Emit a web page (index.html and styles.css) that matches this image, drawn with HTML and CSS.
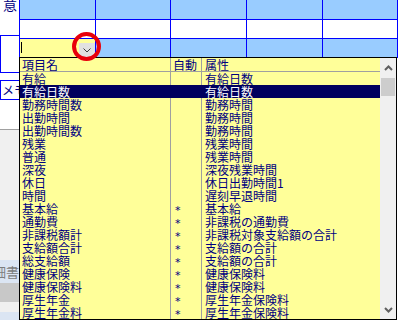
FILE: index.html
```html
<!DOCTYPE html>
<html lang="ja">
<head>
    <meta charset="UTF-8">
    <title>項目選択</title>
    <link rel="stylesheet" href="styles.css">
</head>
<body>
<div class="screen">
    <div class="side">
        <div class="side-head">意</div>
        <div class="side-cell"></div>
        <div class="side-gap"></div>
        <div class="side-box">メモ</div>
        <div class="side-white"></div>
        <div class="side-panel"></div>
        <div class="side-tab">明細書</div>
        <div class="side-bar"></div>
        <div class="side-light"></div>
        <div class="side-foot"></div>
    </div>
    <div class="main">
        <div class="grid">
            <div class="cell blue"></div>
            <div class="cell blue"></div>
            <div class="cell blue"></div>
            <div class="cell blue"></div>
            <div class="cell blue"></div>
            <div class="cell"></div>
            <div class="cell"></div>
            <div class="cell"></div>
            <div class="cell"></div>
            <div class="cell"></div>
            <div class="cell editor">
                <span class="caret"></span>
                <span class="drop-btn">
                    <svg width="8" height="5" viewBox="0 0 8 5"><polyline points="0.5,0.5 4,4 7.5,0.5" fill="none" stroke="#404040" stroke-width="1"/></svg>
                </span>
            </div>
            <div class="cell blue"></div>
            <div class="cell blue"></div>
            <div class="cell blue"></div>
            <div class="cell blue"></div>
        </div>
    </div>

    <!-- dropdown list over the grid -->
    <div class="list">
        <div class="table">
            <div class="row head"><span>項目名</span><span>自動</span><span>属性</span></div>
            <div class="row"><span>有給</span><span></span><span>有給日数</span></div>
            <div class="row selected"><span>有給日数</span><span></span><span>有給日数</span></div>
            <div class="row"><span>勤務時間数</span><span></span><span>勤務時間</span></div>
            <div class="row"><span>出勤時間</span><span></span><span>勤務時間</span></div>
            <div class="row"><span>出勤時間数</span><span></span><span>勤務時間</span></div>
            <div class="row"><span>残業</span><span></span><span>残業時間</span></div>
            <div class="row"><span>普通</span><span></span><span>残業時間</span></div>
            <div class="row"><span>深夜</span><span></span><span>深夜残業時間</span></div>
            <div class="row"><span>休日</span><span></span><span>休日出勤時間1</span></div>
            <div class="row"><span>時間</span><span></span><span>遅刻早退時間</span></div>
            <div class="row"><span>基本給</span><span class="mark">*</span><span>基本給</span></div>
            <div class="row"><span>通勤費</span><span class="mark">*</span><span>非課税の通勤費</span></div>
            <div class="row"><span>非課税額計</span><span class="mark">*</span><span>非課税対象支給額の合計</span></div>
            <div class="row"><span>支給額合計</span><span class="mark">*</span><span>支給額の合計</span></div>
            <div class="row"><span>総支給額</span><span class="mark">*</span><span>支給額の合計</span></div>
            <div class="row"><span>健康保険</span><span class="mark">*</span><span>健康保険料</span></div>
            <div class="row"><span>健康保険料</span><span class="mark">*</span><span>健康保険料</span></div>
            <div class="row"><span>厚生年金</span><span class="mark">*</span><span>厚生年金保険料</span></div>
            <div class="row"><span>厚生年金料</span><span class="mark">*</span><span>厚生年金保険料</span></div>
        </div>
        <div class="scroll">
            <div class="arrow">
                <svg width="9" height="6" viewBox="0 0 9 6"><polyline points="1,5 4.5,1.5 8,5" fill="none" stroke="#606060" stroke-width="2"/></svg>
            </div>
            <div class="thumb"></div>
            <div class="track"></div>
            <div class="arrow">
                <svg width="9" height="6" viewBox="0 0 9 6"><polyline points="1,1 4.5,4.5 8,1" fill="none" stroke="#606060" stroke-width="2"/></svg>
            </div>
        </div>
    </div>

    <div class="ring"></div>
</div>
</body>
</html>
```

FILE: styles.css
```css
body {
    margin: 0;
    font-family: "Noto Sans CJK JP", "Noto Sans", sans-serif;
    font-size: 12px;
}

.screen {
    position: relative;
    display: flex;
    width: 398px;
    height: 320px;
    overflow: hidden;
    background: #ffffff;
}

/* left strip */
.side {
    width: 19px;
    flex-shrink: 0;
    display: flex;
    flex-direction: column;
    overflow: hidden;
}
.side-head {
    height: 38px;
    border-bottom: 1px solid #0000ff;
    font-size: 14px;
    line-height: 14px;
    margin-top: -3px;
    padding-left: 3px;
    color: #000080;
}
.side-cell {
    height: 36px;
    border-left: 1px solid #0000ff;
    border-bottom: 1px solid #0000ff;
}
.side-gap {
    height: 7px;
}
.side-box {
    height: 18px;
    border: 1px solid #0000ff;
    border-right: none;
    line-height: 18px;
    padding-left: 1px;
    white-space: nowrap;
    color: #000080;
}
.side-white {
    height: 29px;
}
.side-panel {
    height: 130px;
    border-top: 1px solid #a0a0a0;
    background: #f0f0f0;
}
.side-tab {
    height: 23px;
    background: #dbe5f3;
    color: #7d7d7d;
    font-size: 13px;
    line-height: 23px;
    display: flex;
    justify-content: flex-end;
    white-space: nowrap;
}
.side-bar {
    height: 19px;
    background: #c8c8c8;
}
.side-light {
    height: 10px;
    background: #f0f0f0;
}
.side-foot {
    flex: 1;
    background: #dbe5f3;
}

/* spreadsheet grid */
.main {
    flex: 1;
}
.grid {
    display: grid;
    grid-template-columns: 75px 74px 75px 75px 74px;
    grid-template-rows: 19px 18px 18px;
    gap: 1px;
    background: #0000ff;
    border-left: 1px solid #0000ff;
    border-right: 1px solid #0000ff;
    border-bottom: 1px solid #0000ff;
}
.cell {
    background: #ffffff;
}
.cell.blue {
    background: #99ccff;
}
.cell.editor {
    background: #ffff99;
    display: flex;
    justify-content: space-between;
    align-items: flex-end;
}
.caret {
    width: 1px;
    height: 11px;
    margin: 0 0 4px 1px;
    background: #000000;
}
.drop-btn {
    width: 16px;
    height: 14px;
    background: #e1e1e1;
    display: flex;
    align-items: center;
    justify-content: center;
}

/* dropdown list */
.list {
    position: absolute;
    left: 19px;
    top: 57px;
    width: 378px;
    height: 263px;
    box-sizing: border-box;
    border: 1px solid #000000;
    display: flex;
    overflow: hidden;
    background: #ffff99;
}
.table {
    width: 360px;
    color: #000080;
}
.row {
    display: grid;
    grid-template-columns: 151px 31px 1fr;
    height: 13px;
    line-height: 13px;
    white-space: nowrap;
}
.row span {
    box-sizing: border-box;
    padding-left: 2px;
    border-right: 1px solid #a0a0a0;
    overflow: hidden;
}
.row span:last-child {
    border-right: none;
    padding-left: 3px;
}
.row.head {
    height: 14px;
    box-sizing: border-box;
    border-bottom: 1px solid #a0a0a0;
}
.row.selected {
    background: #00005e;
    color: #ffffff;
}
.row.selected span {
    border-right-color: #00005e;
}
.row .mark {
    padding-left: 4px;
    font-family: "DejaVu Sans", sans-serif;
    font-size: 11px;
    line-height: 17px;
}

/* scrollbar */
.scroll {
    width: 16px;
    background: #f0f0f0;
    display: flex;
    flex-direction: column;
}
.arrow {
    height: 19px;
    display: flex;
    align-items: center;
    justify-content: center;
}
.thumb {
    height: 18px;
    margin: 1px 1px 0 1px;
    background: #cdcdcd;
}
.track {
    flex: 1;
}

/* red marker ring */
.ring {
    position: absolute;
    left: 72px;
    top: 32px;
    width: 29px;
    height: 29px;
    box-sizing: border-box;
    border: 4px solid #e8000b;
    border-radius: 50%;
}
```
